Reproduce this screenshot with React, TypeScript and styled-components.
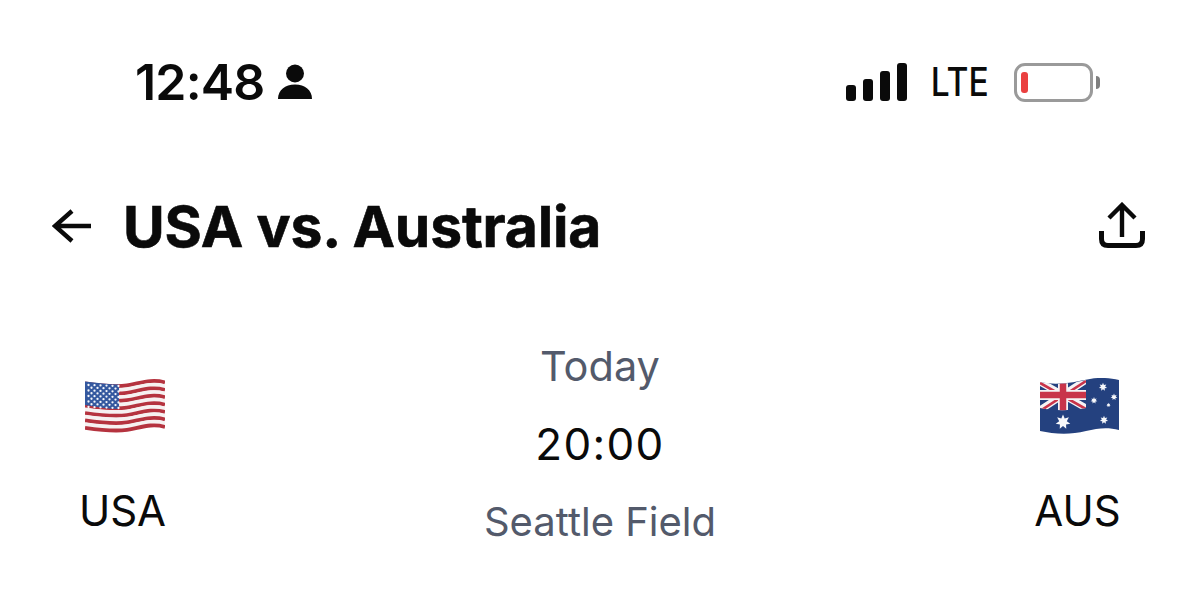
import React from 'react';
import styled, { createGlobalStyle } from 'styled-components';

const GlobalStyle = createGlobalStyle`
  html, body {
    margin: 0;
    padding: 0;
    background: #fff;
    font-family: Inter, "Liberation Sans", sans-serif;
  }
`;

const Page = styled.div`
  width: 1200px;
  height: 589px;
  overflow: hidden;
  background: #fff;
  color: #0a0a0a;
`;

const StatusBar = styled.div`
  display: flex;
  align-items: center;
  justify-content: space-between;
  height: 56px;
  padding: 54px 100px 0 135px;
`;

const StatusLeft = styled.div`
  display: flex;
  align-items: center;
  gap: 12px;
`;

const Clock = styled.span`
  font-size: 50px;
  font-weight: 600;
  line-height: 56px;
  letter-spacing: -0.8px;
`;

const StatusRight = styled.div`
  display: flex;
  align-items: center;
`;

const Network = styled.span`
  font-size: 40px;
  font-weight: 500;
  line-height: 48px;
  margin: 0 25px 0 23px;
  transform: translateX(-5px) scaleX(0.84);
  width: 58px;
  text-align: center;
`;

const Battery = styled.div`
  display: flex;
  align-items: center;
  gap: 3px;
`;

const BatteryBody = styled.div`
  box-sizing: border-box;
  width: 79px;
  height: 39px;
  border: 3px solid #9a9a9a;
  border-radius: 11px;
  padding: 6px 4px;
`;

const BatteryLevel = styled.div`
  width: 7px;
  height: 21px;
  border-radius: 3px;
  background: #ea4040;
`;

const BatteryCap = styled.div`
  width: 4px;
  height: 13px;
  background: #7f7f7f;
  border-radius: 0 5px 5px 0;
`;

const Header = styled.header`
  display: flex;
  align-items: center;
  height: 60px;
  padding: 87px 55px 0 52px;
`;

const BackButton = styled.button`
  display: flex;
  border: 0;
  padding: 0;
  background: none;
  margin: 0 31px 2px 0;
  color: #0a0a0a;
`;

const Title = styled.h1`
  flex: 1;
  margin: 0;
  font-size: 57px;
  font-weight: 700;
  line-height: 60px;
  letter-spacing: -0.2px;
  -webkit-text-stroke: 0.6px #0a0a0a;
`;

const ShareButton = styled.button`
  display: flex;
  border: 0;
  padding: 0;
  background: none;
  margin-bottom: 4px;
  color: #0a0a0a;
`;

const Match = styled.section`
  display: flex;
  justify-content: space-between;
  padding: 85px 79px 0;
`;

const Team = styled.div`
  display: flex;
  flex-direction: column;
  align-items: center;
  width: 87px;
  padding-top: 36px;
`;

const FlagSlot = styled.div`
  display: flex;
  margin-left: 4px;
`;

const TeamName = styled.span`
  margin-top: 50px;
  font-size: 42px;
  line-height: 50px;
`;

const MatchInfo = styled.div`
  display: flex;
  flex-direction: column;
  align-items: center;
  gap: 30px;
`;

const InfoLine = styled.span<{ $muted?: boolean }>`
  font-size: ${({ $muted }) => ($muted ? '40px' : '44px')};
  line-height: 48px;
  color: ${({ $muted }) => ($muted ? '#535a6b' : '#0a0a0a')};
  letter-spacing: ${({ $muted }) => ($muted ? '0' : '1.3px')};
`;

const DayLine = styled(InfoLine)`
  font-size: 41.5px;
`;

const stripePath = (y: number) =>
  `M0 ${y} C 14 ${y + 2} 28 ${y + 4} 42 ${y + 2} C 55 ${y} 66 ${y - 5} 80 ${y - 1}`;

const UsaFlag = () => {
  const stripes = Array.from({ length: 13 }, (_, i) => i);
  const stars: [number, number][] = [];
  for (let row = 0; row < 9; row++) {
    const count = row % 2 === 0 ? 6 : 5;
    for (let col = 0; col < count; col++) {
      stars.push([3.5 + col * 6 + (row % 2 === 0 ? 0 : 3), 7 + row * 2.75 + col * 0.2]);
    }
  }
  return (
    <svg width="80" height="58" viewBox="0 0 80 58" aria-label="USA flag">
      {stripes.map((i) => (
        <path
          key={i}
          d={stripePath(5.5 + i * 3.7)}
          fill="none"
          stroke={i % 2 === 0 ? '#b5333f' : '#f6f1f1'}
          strokeWidth="3.9"
        />
      ))}
      <path d="M0 3.5 C 12 5 24 6.5 34 6.5 V 31 C 23 31 11 29 0 27 Z" fill="#34589f" />
      {stars.map(([x, y]) => (
        <circle key={`${x}-${y}`} cx={x} cy={y} r="1.15" fill="#f4f6fb" />
      ))}
    </svg>
  );
};

const AusStar = ({ x, y, r }: { x: number; y: number; r: number }) => {
  const points = Array.from({ length: 14 }, (_, i) => {
    const radius = i % 2 === 0 ? r : r * 0.52;
    const angle = (Math.PI * i) / 7 - Math.PI / 2;
    return `${x + radius * Math.cos(angle)},${y + radius * Math.sin(angle)}`;
  }).join(' ');
  return <polygon points={points} fill="#f7f8fb" />;
};

const AusFlag = () => (
  <svg width="80" height="58" viewBox="0 0 80 58" aria-label="Australia flag">
    <defs>
      <clipPath id="aus-jack">
        <path d="M0 4 C 16 7 30 6 46 2 V 30 C 30 33 14 33 0 30 Z" />
      </clipPath>
    </defs>
    <path
      d="M0 4 C 18 8 34 4 50 1 C 60 -1 70 0 79 2 V 52 C 68 49 58 50 46 53 C 30 57 14 56 0 53 Z"
      fill="#24417f"
    />
    <g clipPath="url(#aus-jack)">
      <path d="M0 4 L46 30 M46 2 L0 32" stroke="#f5f3f5" strokeWidth="7" />
      <path d="M0 5 L46 31 M46 3 L0 33" stroke="#c8344a" strokeWidth="2.6" />
      <path d="M23 0 V36 M0 17 H46" stroke="#f5f3f5" strokeWidth="10" />
      <path d="M23 0 V36 M0 17 H46" stroke="#c8344a" strokeWidth="6.5" />
    </g>
    <AusStar x={23} y={44} r={7.5} />
    <AusStar x={63} y={9} r={4.2} />
    <AusStar x={54} y={22.5} r={3.4} />
    <AusStar x={74} y={19} r={3.4} />
    <AusStar x={68.5} y={27} r={2.2} />
    <AusStar x={64} y={42} r={4.2} />
  </svg>
);

const App: React.FC = () => (
  <>
    <GlobalStyle />
    <Page>
      <StatusBar>
        <StatusLeft>
          <Clock>12:48</Clock>
          <svg width="36" height="36" viewBox="0 0 36 36" aria-hidden="true">
            <circle cx="18" cy="9.5" r="9" fill="#0a0a0a" />
            <path d="M1 35 C 1 26 8 20.5 18 20.5 C 28 20.5 35 26 35 35 Z" fill="#0a0a0a" />
          </svg>
        </StatusLeft>
        <StatusRight>
          <svg width="62" height="38" viewBox="0 0 62 38" aria-hidden="true">
            <rect x="0" y="22" width="10" height="16" rx="3" fill="#0a0a0a" />
            <rect x="17" y="16" width="10" height="22" rx="3" fill="#0a0a0a" />
            <rect x="34" y="8" width="10" height="30" rx="3" fill="#0a0a0a" />
            <rect x="51" y="0" width="10" height="38" rx="3" fill="#0a0a0a" />
          </svg>
          <Network>LTE</Network>
          <Battery>
            <BatteryBody>
              <BatteryLevel />
            </BatteryBody>
            <BatteryCap />
          </Battery>
        </StatusRight>
      </StatusBar>
      <Header>
        <BackButton aria-label="Back">
          <svg width="40" height="36" viewBox="0 0 40 36" fill="none" aria-hidden="true">
            <path d="M20 3 L3 18 L20 33 M3 18 H39" stroke="currentColor" strokeWidth="4.4" />
          </svg>
        </BackButton>
        <Title>USA vs. Australia</Title>
        <ShareButton aria-label="Share">
          <svg width="46" height="46" viewBox="0 0 46 46" fill="none" aria-hidden="true">
            <path d="M10 16 L23 3 L36 16 M23 3 V35" stroke="currentColor" strokeWidth="4.4" />
            <path d="M2.5 29 V37 Q2.5 43.5 9 43.5 H37 Q43.5 43.5 43.5 37 V29" stroke="currentColor" strokeWidth="5" />
          </svg>
        </ShareButton>
      </Header>
      <Match>
        <Team>
          <FlagSlot>
            <UsaFlag />
          </FlagSlot>
          <TeamName>USA</TeamName>
        </Team>
        <MatchInfo>
          <DayLine $muted>Today</DayLine>
          <InfoLine>20:00</InfoLine>
          <InfoLine $muted>Seattle Field</InfoLine>
        </MatchInfo>
        <Team>
          <FlagSlot>
            <AusFlag />
          </FlagSlot>
          <TeamName>AUS</TeamName>
        </Team>
      </Match>
    </Page>
  </>
);

export default App;
